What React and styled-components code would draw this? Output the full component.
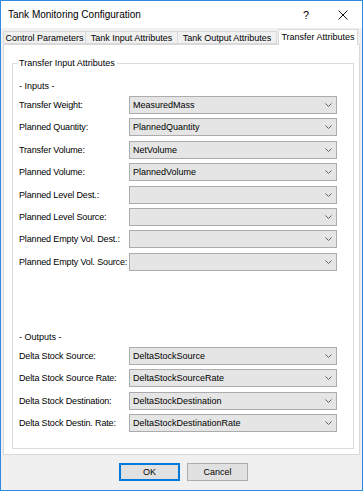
import React from 'react'
import styled, { createGlobalStyle } from 'styled-components'

const GlobalStyle = createGlobalStyle`
    html, body {
        margin: 0;
        padding: 0;
        background: #f0f0f0;
    }
    * {
        box-sizing: border-box;
    }
`

const Window = styled.div`
    width: 363px;
    height: 491px;
    border: 1px solid #2e8be0;
    background: #f0f0f0;
    display: flex;
    flex-direction: column;
    font-family: "Liberation Sans", Arial, sans-serif;
    font-size: 9px;
    color: #000;
`

const TitleBar = styled.div`
    height: 27px;
    flex: none;
    background: #fff;
    display: flex;
    align-items: center;
    padding-left: 7px;
`

const TitleText = styled.div`
    flex: 1;
    font-size: 10px;
`

const HelpGlyph = styled.div`
    font-size: 11px;
    margin-right: 29px;
`

const CloseIcon = styled.svg`
    width: 10px;
    height: 10px;
    margin-right: 14px;
`

const TabStrip = styled.div`
    height: 16px;
    flex: none;
    display: flex;
    align-items: flex-end;
    padding-left: 2px;
`

const Tab = styled.div`
    width: ${p => p.$w}px;
    height: ${p => (p.$active ? 16 : 13)}px;
    margin-bottom: ${p => (p.$active ? -1 : 0)}px;
    margin-left: ${p => (p.$active ? 1 : 0)}px;
    position: relative;
    z-index: ${p => (p.$active ? 1 : 0)};
    background: ${p => (p.$active ? '#fff' : '#f0f0f0')};
    border: 1px solid #d9d9d9;
    border-bottom: ${p => (p.$active ? 'none' : '1px solid #d9d9d9')};
    border-left: ${p => (p.$first || p.$active ? '1px solid #d9d9d9' : 'none')};
    display: flex;
    align-items: center;
    justify-content: center;
    white-space: nowrap;
    padding-bottom: ${p => (p.$active ? 1 : 0)}px;
`

const Panel = styled.div`
    height: 411px;
    flex: none;
    margin: 0 2px;
    background: #fff;
    border: 1px solid #d9d9d9;
    display: flex;
    flex-direction: column;
`

const Group = styled.div`
    position: relative;
    height: 386px;
    margin: 18px 5px 5px 8px;
    border: 1px solid #dcdcdc;
    padding: 16px 0 0 6px;
    display: flex;
    flex-direction: column;
`

const GroupTitle = styled.div`
    position: absolute;
    top: -7px;
    left: 4px;
    padding: 0 2px;
    background: #fff;
    line-height: 12px;
`

const SectionHeading = styled.div`
    line-height: 12px;
    margin-top: ${p => p.$top || 0}px;
    margin-bottom: 4px;
`

const FieldList = styled.div`
    display: flex;
    flex-direction: column;
    gap: 4.4px;
`

const FieldRow = styled.div`
    display: grid;
    grid-template-columns: 110px 208px;
    align-items: center;
    height: 18px;
`

const Label = styled.div`
    white-space: nowrap;
    letter-spacing: -0.15px;
`

const Combo = styled.div`
    height: 18px;
    background: #e5e5e5;
    border: 1px solid #acacac;
    display: flex;
    align-items: center;
    padding-left: 3px;
    padding-right: 4px;
`

const ComboValue = styled.div`
    flex: 1;
    white-space: nowrap;
    overflow: hidden;
`

const Chevron = styled.svg`
    width: 7px;
    height: 4px;
`

const ButtonRow = styled.div`
    flex: 1;
    display: flex;
    justify-content: center;
    align-items: flex-start;
    gap: 7px;
    padding-top: 8px;
    padding-left: 4px;
`

const Button = styled.button`
    width: 61px;
    height: 18px;
    background: #e1e1e1;
    border: 1px solid ${p => (p.$default ? '#0078d7' : '#adadad')};
    box-shadow: ${p => (p.$default ? 'inset 0 0 0 1px #0078d7' : 'none')};
    font-family: inherit;
    font-size: 9px;
    color: #000;
    padding: 0;
    cursor: pointer;
`

const tabs = [
    { label: 'Control Parameters', w: 83 },
    { label: 'Tank Input Attributes', w: 92 },
    { label: 'Tank Output Attributes', w: 99 },
    { label: 'Transfer Attributes', w: 80, active: true },
]

const inputs = [
    ['Transfer Weight:', 'MeasuredMass'],
    ['Planned Quantity:', 'PlannedQuantity'],
    ['Transfer Volume:', 'NetVolume'],
    ['Planned Volume:', 'PlannedVolume'],
    ['Planned Level Dest.:', ''],
    ['Planned Level Source:', ''],
    ['Planned Empty Vol. Dest.:', ''],
    ['Planned Empty Vol. Source:', ''],
]

const outputs = [
    ['Delta Stock Source:', 'DeltaStockSource'],
    ['Delta Stock Source Rate:', 'DeltaStockSourceRate'],
    ['Delta Stock Destination:', 'DeltaStockDestination'],
    ['Delta Stock Destin. Rate:', 'DeltaStockDestinationRate'],
]

const Field = ({ label, value }) => (
    <FieldRow>
        <Label>{label}</Label>
        <Combo>
            <ComboValue>{value}</ComboValue>
            <Chevron viewBox="0 0 7 4">
                <path d="M0.5 0.5 L3.5 3.5 L6.5 0.5" fill="none" stroke="#606060" strokeWidth="1" />
            </Chevron>
        </Combo>
    </FieldRow>
)

const App = () => {
    return (
        <>
            <GlobalStyle />
            <Window>
                <TitleBar>
                    <TitleText>Tank Monitoring Configuration</TitleText>
                    <HelpGlyph>?</HelpGlyph>
                    <CloseIcon viewBox="0 0 10 10">
                        <path d="M0.5 0.5 L9.5 9.5 M9.5 0.5 L0.5 9.5" stroke="#111" strokeWidth="1" />
                    </CloseIcon>
                </TitleBar>
                <TabStrip>
                    {tabs.map((t, i) => (
                        <Tab key={t.label} $w={t.w} $active={t.active} $first={i === 0}>{t.label}</Tab>
                    ))}
                </TabStrip>
                <Panel>
                    <Group>
                        <GroupTitle>Transfer Input Attributes</GroupTitle>
                        <SectionHeading>- Inputs -</SectionHeading>
                        <FieldList>
                            {inputs.map(([l, v]) => <Field key={l} label={l} value={v} />)}
                        </FieldList>
                        <SectionHeading $top={60}>- Outputs -</SectionHeading>
                        <FieldList>
                            {outputs.map(([l, v]) => <Field key={l} label={l} value={v} />)}
                        </FieldList>
                    </Group>
                </Panel>
                <ButtonRow>
                    <Button $default>OK</Button>
                    <Button>Cancel</Button>
                </ButtonRow>
            </Window>
        </>
    )
}

export default App
